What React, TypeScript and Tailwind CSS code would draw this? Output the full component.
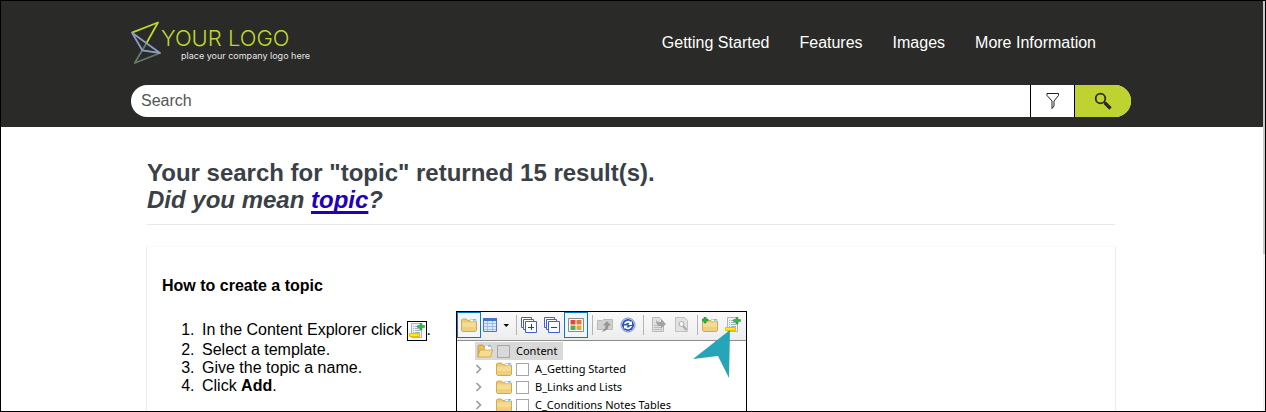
import React from "react";

const navItems = ["Getting Started", "Features", "Images", "More Information"];
const folders = ["A_Getting Started", "B_Links and Lists", "C_Conditions Notes Tables"];

function Separator() {
  return <span className="h-5 w-px shrink-0 bg-[#b4b4b4]" />;
}

function ToolButton({ label, active, children }: { label: string; active?: boolean; children: React.ReactNode }) {
  return (
    <button
      type="button"
      aria-label={label}
      className={
        active
          ? "flex h-[26px] w-6 shrink-0 items-center justify-center border border-[#0a78c8] bg-[#f3f6f9]"
          : "flex h-[26px] w-4 shrink-0 items-center justify-center"
      }
    >
      {children}
    </button>
  );
}

function FolderIcon({ plus }: { plus?: boolean }) {
  return (
    <svg className="size-4 shrink-0" viewBox="0 0 16 16">
      <path d="M0.5 13.5V3l1-1h4l1 1.5h8l1 1v9l-1 1h-13z" fill="#edcb72" stroke="#c79b3b" strokeWidth=".8" />
      <path d="M9 2.5h6v2H9z" fill="#fff" stroke="#c9a75a" strokeWidth=".5" />
      <path d="M12 2.5h2.5v1H12z" fill="#2ba3e0" />
      <path d="M1 5.5h14v8.500H1z" fill="#f5dc94" />
      <path d="M1 10h14v4H1z" fill="#e9c66c" opacity=".6" />
      {plus && <path d="M2 0h2v2h2v2H4v2H2V4H0V2h2z" fill="#2fb344" stroke="#168a2b" strokeWidth=".5" />}
    </svg>
  );
}

function OpenFolderIcon() {
  return (
    <svg className="size-4 shrink-0" viewBox="0 0 16 16">
      <path d="M1 14V3l1-1h4l1 1.5h7V8" fill="#e7bf61" stroke="#bf9033" strokeWidth=".8" />
      <path d="M8 3h6v4H8z" fill="#fff" />
      <path d="M11 2.5h3v1h-3z" fill="#2ba3e0" />
      <path d="M0.7 14L3 7h12.6l-2 7z" fill="#f6dc91" stroke="#cda145" strokeWidth=".8" />
    </svg>
  );
}

function NewTopicIcon() {
  return (
    <svg className="inline-block size-4 shrink-0" viewBox="0 0 16 16">
      <path d="M2.5 .5h10v14h-10z" fill="#eef2f5" stroke="#a9b4bc" />
      <path d="M4 3.500h1m1 0h4M4 5.500h1m1 0h5M4 7.500h1m1 0h5M4 9.500h1m1 0h5" stroke="#a3b1bb" />
      <path d="M.5 10.500h10v3H.5z" fill="#ffec00" stroke="#f0bb00" />
      <path d="M11 .5h2v2h2.5v2H13V7h-2V4.500H8.500v-2H11z" fill="#2fba4a" stroke="#168a2b" strokeWidth=".5" />
    </svg>
  );
}

function StackIcon({ plus }: { plus?: boolean }) {
  return (
    <svg className="size-4 shrink-0" viewBox="0 0 16 16" fill="#fff" stroke="#3b5fe0">
      <path d="M.5 .5h10v10H.5z" />
      <path d="M2.5 2.5h10v10h-10z" />
      <path d="M4.5 4.5h11v11h-11z" />
      <path d={plus ? "M7 10.500h6M10.500 7v6" : "M7 10.500h6"} stroke="#173f9b" />
    </svg>
  );
}

function Toolbar() {
  return (
    <div className="h-[29px] border-b border-[#8c8c8c] bg-gradient-to-b from-[#fafafa] to-[#ededed]">
      <div className="flex items-center">
        <ToolButton label="Show folders" active><FolderIcon /></ToolButton>
        <div className="flex items-center gap-1 pl-px pr-1.5">
          <ToolButton label="View">
            <svg className="size-4" viewBox="0 0 16 16">
              <path d="M1.500 1.500h13v13h-13z" fill="#dce9ff" stroke="#4a78cf" />
              <path d="M1 1h14v3H1z" fill="#4474cc" />
              <path d="M2 6.500h12M2 9.500h12M2 12.500h12M5.500 4v10M10.500 4v10" stroke="#9dbcf2" />
            </svg>
          </ToolButton>
          <svg className="h-4 w-2" viewBox="0 0 8 16"><path d="M1.500 7h5.500L4.250 10z" /></svg>
        </div>
        <div className="flex items-center gap-1">
          <Separator />
          <div className="flex items-center gap-[7px]">
            <ToolButton label="Expand all"><StackIcon plus /></ToolButton>
            <ToolButton label="Collapse all"><StackIcon /></ToolButton>
          </div>
          <ToolButton label="Show files" active>
            <svg className="size-4 shrink-0" viewBox="0 0 16 16">
              <path d="M.5 1.500h15v13H.5z" fill="#fff" stroke="#8b8b8b" />
              <path d="M2.500 3h5v4.500h-5z" fill="#e2473f" /><path d="M8.500 3h5v4.500h-5z" fill="#e9743a" />
              <path d="M2.500 8.500h5V13h-5z" fill="#43b549" /><path d="M8.500 8.500h5V13h-5z" fill="#e5aa35" />
            </svg>
          </ToolButton>
          <Separator />
          <div className="flex items-center gap-[7px]">
            <ToolButton label="Open location">
              <svg className="size-4" viewBox="0 0 16 16"><path d="M.5 3.500h5l1-1h9v10H.5z" fill="#d1d1d1" stroke="#bbb" /><path d="M10 4l4 4.500h-2.500c0 4-3 6-7 6 2-1 4-3 4-6H6z" fill="#969696" /></svg>
            </ToolButton>
            <ToolButton label="Synchronize">
              <svg className="size-4" viewBox="0 0 16 16"><circle cx="8" cy="8" r="7" fill="#e6edfa" stroke="#7b8fc0" /><circle cx="8" cy="8" r="6" fill="#2c55c4" /><path d="M4 7a4.200 4.200 0 017-2l1-1v4H8l1.500-1.500A2.400 2.400 0 006 7zm8 2a4.200 4.200 0 01-7 2l-1 1V8.500h4L6.500 10A2.400 2.400 0 0010 9z" fill="#fff" /></svg>
            </ToolButton>
            <Separator />
            <ToolButton label="Open document">
              <svg className="size-4" viewBox="0 0 16 16"><path d="M1.500 .5h7l4 4v10h-11z" fill="#e0e0e0" stroke="#b8b8b8" /><path d="M3 8.500h7M3 10.500h8M3 12.500h8" stroke="#bbb" /><path d="M5 3c1 2 3 2 5 2V2.500L15 7l-5 4.500V9C7 9 5 7 5 3z" fill="#a2a2a2" /></svg>
            </ToolButton>
            <ToolButton label="Properties">
              <svg className="size-4" viewBox="0 0 16 16"><path d="M1.500 .5h9l3 3v11h-12z" fill="#e2e2e2" stroke="#c0c0c0" /><circle cx="7.500" cy="7" r="2.500" fill="#f4f4f4" stroke="#aaa" /><path d="M9 9l3.500 4" stroke="#aaa" strokeWidth="2" /></svg>
            </ToolButton>
            <Separator />
          </div>
          <div className="flex items-center gap-[7px]">
            <ToolButton label="New folder"><FolderIcon plus /></ToolButton>
            <ToolButton label="New topic"><NewTopicIcon /></ToolButton>
          </div>
        </div>
      </div>
    </div>
  );
}

function Check({ label }: { label: string }) {
  return <input type="checkbox" aria-label={label} className="size-[13px] shrink-0 appearance-none border border-[#a6a6a6] bg-transparent" />;
}

function ContentExplorer() {
  return (
    <div className="relative w-[291px] shrink-0 self-start border border-black bg-white font-['Noto_Sans','Open_Sans',sans-serif] text-[11px]">
      <Toolbar />
      <ul className="pt-px leading-[18px]">
        <li className="flex pl-[18px]">
          <span className="flex h-[18px] items-center gap-1 bg-[#d9d9d9] pl-0.5 pr-1.5">
            <OpenFolderIcon /><Check label="Content" /><span className="pl-0.5">Content</span>
          </span>
        </li>
        {folders.map((f) => (
          <li key={f} className="flex h-[18px] items-center gap-1 pl-[18px]">
            <svg className="mr-[9px] h-3 w-2 shrink-0" viewBox="0 0 8 12"><path d="M1.5 2l4 4-4 4" fill="none" stroke="#999" strokeWidth="1.6" /></svg>
            <FolderIcon /><Check label={f} /><span className="pl-0.5">{f}</span>
          </li>
        ))}
      </ul>
      <svg className="pointer-events-none absolute right-2 top-4 h-[52px] w-12" viewBox="0 0 48 52">
        <path d="M40 2L3 31l25-3 11 22z" fill="#26a5b8" />
      </svg>
    </div>
  );
}

export default function App() {
  return (
    <div className="flex h-screen overflow-hidden border border-black bg-white font-['Liberation_Sans',Arial,sans-serif] text-black">
      <div className="flex min-w-0 flex-1 flex-col">
        <header className="h-[126px] shrink-0 bg-[#2a2a28]">
          <div className="mx-auto w-full max-w-[1002px] pr-0.5">
            <div className="flex h-[84px] items-center justify-between pr-[35px]">
              <a href="#home" className="flex items-start">
                <svg className="h-[44px] w-[30px] shrink-0" viewBox="0 0 30 44" fill="none" strokeWidth="1.8" strokeLinejoin="round">
                  <path d="M15.700 21.700L3.700 42l25.500-10" stroke="#66786b" />
                  <path d="M1 11.700L27 1.500 15.700 21.700" stroke="#bed730" />
                  <path d="M1 11.700L29 32l-17.700-2.700z" stroke="#8b9cc0" />
                </svg>
                <span className="flex flex-col font-['Inter','Liberation_Sans',sans-serif]">
                  <span className="pt-[5px] text-[22px] leading-6 font-light text-[#bed730]">YOUR LOGO</span>
                  <span className="pl-5 text-[9px] leading-3 text-[#e5e5e5]">place your company logo here</span>
                </span>
              </a>
              <nav className="flex gap-[30px] text-base text-white">
                {navItems.map((n) => <a key={n} href="#nav">{n}</a>)}
              </nav>
            </div>
            <form className="flex h-8 overflow-hidden rounded-full bg-white" onSubmit={(e) => e.preventDefault()}>
              <input aria-label="Search" placeholder="Search" className="min-w-0 flex-1 px-2.5 text-base outline-none placeholder:text-[#555]" />
              <button type="button" aria-label="Filter" className="flex w-[45px] items-center justify-center border-x border-black">
                <svg className="h-4 w-[14px]" viewBox="0 0 14 16" fill="none" stroke="#222"><path d="M1 .5h11.500v2L8 8v5l-2 2.500V8L1 2.500z" /></svg>
              </button>
              <button type="submit" aria-label="Submit search" className="flex w-14 items-center justify-center bg-[#bed230]">
                <svg className="size-[18px]" viewBox="0 0 18 18" fill="none" stroke="#2a2a28"><circle cx="6.500" cy="6.500" r="4.800" strokeWidth="1.800" /><path d="M10 10l1.500 1.500" strokeWidth="2" /><path d="M11 11l5.500 5.500" strokeWidth="3.400" /></svg>
              </button>
            </form>
          </div>
        </header>
        <main className="mx-auto flex min-h-0 w-full max-w-[1002px] flex-1 flex-col pl-4 pr-[18px]">
          <h1 className="border-b border-[#e8e8e8] pb-[11px] pt-8 text-2xl leading-[27px] font-bold text-[#3b4047]">
            Your search for "topic" returned 15 result(s).
            <br />
            <em>Did you mean <a href="#topic" className="text-[#2200bb] underline decoration-3 underline-offset-3 [text-decoration-skip-ink:none]">topic</a>?</em>
          </h1>
          <section className="-mx-px mt-[21px] min-h-0 flex-1 border-x border-t border-[#ececec] border-t-[#fafafa] px-[15px]">
            <h2 className="pt-[30px] text-base leading-[18px] font-bold">How to create a topic</h2>
            <div className="flex pt-4">
              <ol className="w-[294px] shrink-0 list-decimal pt-[10px] pl-[37px] text-base leading-[18px]">
                <li className="pl-[3px]">In the Content Explorer click <span className="inline-flex size-5 items-center justify-center border border-black align-middle"><NewTopicIcon /></span>.</li>
                <li className="pl-[3px]">Select a template.</li>
                <li className="pl-[3px]">Give the topic a name.</li>
                <li className="pl-[3px]">Click <b>Add</b>.</li>
              </ol>
              <ContentExplorer />
            </div>
          </section>
        </main>
      </div>
      <div className="w-0.5 shrink-0 bg-[#f1f1f1]"><div className="h-[253px] bg-[#c8c8c8]" /></div>
    </div>
  );
}
